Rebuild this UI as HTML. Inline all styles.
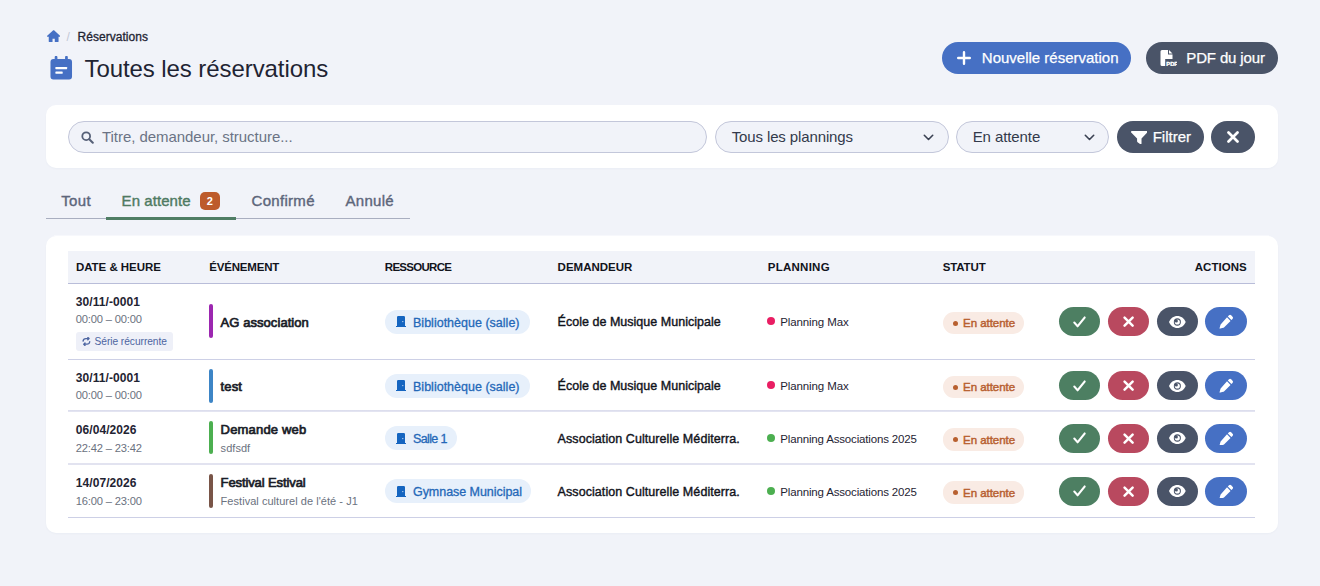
<!DOCTYPE html>
<html lang="fr">
<head>
<meta charset="utf-8">
<title>Toutes les réservations</title>
<style>
*{box-sizing:border-box;margin:0;padding:0}
html,body{width:1320px;height:586px;overflow:hidden}
body{background:#f1f3f9;font-family:"Liberation Sans",sans-serif;color:#1f2433;position:relative}
.abs{position:absolute}
svg{display:block;position:absolute}
.t{position:absolute;white-space:nowrap;line-height:1}
.btn{position:absolute;height:32px;border-radius:16px}
.card{position:absolute;left:46px;width:1231.500px;background:#fff;border-radius:10px;box-shadow:0 1px 2px rgba(40,50,100,.03)}
.inp{position:absolute;top:120.5px;height:32px;border-radius:16px;background:#f1f3f9;border:1px solid #c3c7da}
.hline{position:absolute;left:68px;width:1187px;height:1px;background:#cdd0e6}
.bar{position:absolute;left:209px;width:4px;border-radius:2px}
.res{position:absolute;left:384.5px;height:24px;border-radius:12px;background:#e7f0fb}
.dot{position:absolute;left:766.8px;width:8px;height:8px;border-radius:50%}
.st{position:absolute;left:943px;width:80.8px;height:22px;border-radius:11px;background:#f9ebe4}
.st i{position:absolute;left:10px;top:8.500px;width:5px;height:5px;border-radius:50%;background:#b8602f}
.ab{position:absolute;height:29px;border-radius:14.500px}
</style>
</head>
<body>
<!-- breadcrumb -->
<svg style="left:46.700px;top:29.800px;width:13.300px;height:12.400px" viewBox="0 0 13 12" preserveAspectRatio="none"><path fill="#4670c4" d="M6.500.2a.6.6 0 0 1 .4.150l5.900 5.300a.55.55 0 0 1-.37.960H11.300V11a1 1 0 0 1-1 1H7.600V8.500H5.400V12H2.700a1 1 0 0 1-1-1V6.600H.570a.55.55 0 0 1-.37-.960L6.100.350A.6.6 0 0 1 6.500.2z"/></svg>
<div class="t" style="left:66.50px;top:31.04px;font-size:12px;color:#c3c7d6;">/</div>
<div class="t" style="left:77.50px;top:31.04px;font-size:12px;color:#1f2433;letter-spacing:0.04px;-webkit-text-stroke:0.3px #1f2433;">Réservations</div>
<!-- title -->
<svg style="left:50px;top:56px;width:22.500px;height:23.500px" viewBox="0 0 22 24"><path fill="#4670c4" d="M4.300 1.200a1.400 1.400 0 0 1 2.800 0V3h7.800V1.200a1.400 1.400 0 0 1 2.800 0V3H19a3 3 0 0 1 3 3v15a3 3 0 0 1-3 3H3a3 3 0 0 1-3-3V6a3 3 0 0 1 3-3h1.300z"/><rect x="5" y="11.200" width="12" height="2.400" rx=".5" fill="#fff"/><rect x="5" y="15.800" width="7.500" height="2.400" rx=".5" fill="#fff"/></svg>
<div class="t" style="left:84.50px;top:57.48px;font-size:24px;color:#1f2433;letter-spacing:-0.08px;">Toutes les réservations</div>
<!-- header buttons -->
<div class="btn" style="left:942px;top:41.500px;width:189px;background:#4670c4"><svg style="left:14.500px;top:9px;width:14px;height:14px" viewBox="0 0 14 14"><path d="M7 1.200v11.600M1.200 7h11.600" stroke="#fff" stroke-width="2.400" stroke-linecap="round"/></svg></div>
<div class="t" style="left:981.80px;top:49.90px;font-size:15px;color:#fff;-webkit-text-stroke:0.25px #fff;">Nouvelle réservation</div>
<div class="btn" style="left:1146px;top:41.500px;width:132px;background:#4a5468"><svg style="left:14px;top:8px;width:17px;height:16px" viewBox="0 0 17 16"><path fill="#fff" d="M2 0h6v4.500h4.500V9H5.200v7H2a1.500 1.500 0 0 1-1.500-1.500v-13A1.500 1.500 0 0 1 2 0zM9 0l3.500 3.500H9z"/><text x="6.300" y="15.600" font-family="Liberation Sans, sans-serif" font-weight="700" font-size="5.800" fill="#fff" stroke="#fff" stroke-width=".35">PDF</text></svg></div>
<div class="t" style="left:1186.30px;top:49.90px;font-size:15px;color:#fff;letter-spacing:-0.14px;-webkit-text-stroke:0.25px #fff;">PDF du jour</div>
<!-- filter card -->
<div class="card" style="top:105px;height:63px"></div>
<div class="inp" style="left:68px;width:639px"><svg style="left:11.800px;top:9.200px;width:13px;height:13px" viewBox="0 0 13 13"><circle cx="5.200" cy="5.200" r="3.900" fill="none" stroke="#566077" stroke-width="1.800"/><path d="M8.300 8.300L11.800 11.800" stroke="#566077" stroke-width="2" stroke-linecap="round"/></svg></div>
<div class="t" style="left:102.00px;top:128.80px;font-size:15px;color:#6b7385;letter-spacing:-0.05px;">Titre, demandeur, structure...</div>
<div class="inp" style="left:715px;width:234px"><svg style="left:206.500px;top:12px;width:11px;height:7px" viewBox="0 0 11 7"><path d="M1.300 1.300L5.500 5.500l4.200-4.200" fill="none" stroke="#3a4152" stroke-width="1.600" stroke-linecap="round" stroke-linejoin="round"/></svg></div>
<div class="t" style="left:731.70px;top:128.80px;font-size:15px;color:#333a4b;letter-spacing:-0.12px;">Tous les plannings</div>
<div class="inp" style="left:956px;width:153px"><svg style="left:126.500px;top:12px;width:11px;height:7px" viewBox="0 0 11 7"><path d="M1.300 1.300L5.500 5.500l4.200-4.200" fill="none" stroke="#3a4152" stroke-width="1.600" stroke-linecap="round" stroke-linejoin="round"/></svg></div>
<div class="t" style="left:972.70px;top:128.80px;font-size:15px;color:#333a4b;letter-spacing:-0.09px;">En attente</div>
<div class="btn" style="left:1117px;top:120.500px;width:87px;background:#4a5468"><svg style="left:13.500px;top:10.300px;width:16.500px;height:13.500px" viewBox="0 0 16 14" preserveAspectRatio="none"><path fill="#fff" d="M.900 0h14.200a.900.900 0 0 1 .7 1.500L10.200 7.800V13a.800.800 0 0 1-1.300.6l-2.500-1.900a1.200 1.200 0 0 1-.5-1V7.800L.2 1.500A.900.900 0 0 1 .900 0z"/></svg></div>
<div class="t" style="left:1152.70px;top:128.80px;font-size:15px;color:#fff;-webkit-text-stroke:0.25px #fff;">Filtrer</div>
<div class="btn" style="left:1211px;top:120.500px;width:44px;background:#4a5468"><svg style="left:16px;top:10px;width:12px;height:12px" viewBox="0 0 12 12"><path d="M1.500 1.500l9 9M10.500 1.500l-9 9" stroke="#fff" stroke-width="2.700" stroke-linecap="round"/></svg></div>
<!-- tabs -->
<div class="t" style="left:61.20px;top:193.30px;font-size:15px;color:#5d667b;letter-spacing:0.34px;-webkit-text-stroke:0.4px #5d667b;">Tout</div>
<div class="t" style="left:121.60px;top:193.30px;font-size:15px;color:#4e7a62;letter-spacing:0.06px;-webkit-text-stroke:0.4px #4e7a62;">En attente</div>
<div class="abs" style="left:200px;top:191.500px;width:20px;height:18.500px;border-radius:5px;background:#bd5b2b"></div>
<div class="t" style="left:206.80px;top:196.29px;font-size:11px;color:#fff;font-weight:700;">2</div>
<div class="t" style="left:251.50px;top:193.30px;font-size:15px;color:#5d667b;letter-spacing:0.31px;-webkit-text-stroke:0.4px #5d667b;">Confirmé</div>
<div class="t" style="left:345.50px;top:193.30px;font-size:15px;color:#5d667b;letter-spacing:0.3px;-webkit-text-stroke:0.4px #5d667b;">Annulé</div>
<div class="abs" style="left:46px;top:218px;width:364px;height:1px;background:#a9aec0"></div>
<div class="abs" style="left:105.500px;top:217px;width:130.500px;height:3px;background:#4f7d64"></div>
<!-- table -->
<div class="abs" style="left:54px;top:235px;width:1215px;height:1px;background:#f7f8fc"></div><div class="card" style="top:236px;height:297px"></div>
<div class="abs" style="left:68px;top:251px;width:1187px;height:32px;background:#f1f3f9"></div>
<div class="hline" style="top:283px;background:#b9bdd9"></div>
<div class="t" style="left:75.90px;top:262.06px;font-size:11.5px;color:#12141c;font-weight:700;letter-spacing:-0.03px;">DATE &amp; HEURE</div>
<div class="t" style="left:209.25px;top:262.06px;font-size:11.5px;color:#12141c;font-weight:700;letter-spacing:-0.18px;">ÉVÉNEMENT</div>
<div class="t" style="left:384.80px;top:262.06px;font-size:11.5px;color:#12141c;font-weight:700;letter-spacing:-0.71px;">RESSOURCE</div>
<div class="t" style="left:557.60px;top:262.06px;font-size:11.5px;color:#12141c;font-weight:700;">DEMANDEUR</div>
<div class="t" style="left:767.70px;top:262.06px;font-size:11.5px;color:#12141c;font-weight:700;letter-spacing:0.27px;">PLANNING</div>
<div class="t" style="left:942.70px;top:262.06px;font-size:11.5px;color:#12141c;font-weight:700;letter-spacing:-0.12px;">STATUT</div>
<div class="t" style="right:73.20px;top:262.06px;font-size:11.5px;color:#12141c;font-weight:700;letter-spacing:0.05px;">ACTIONS</div>
<!-- row -->
<div class="t" style="left:75.75px;top:296.14px;font-size:12px;color:#1f2433;font-weight:700;letter-spacing:0.08px;">30/11/-0001</div>
<div class="t" style="left:75.75px;top:313.82px;font-size:11.2px;color:#6b7280;letter-spacing:-0.19px;">00:00 – 00:00</div>
<div class="abs" style="left:76.200px;top:332px;width:96.500px;height:19.300px;border-radius:3px;background:#eef0f8"><svg style="left:6.300px;top:5.300px;width:8.800px;height:8.800px" viewBox="0 0 10 10"><path d="M1.200 4.600A3.200 3.200 0 0 1 4.400 1.800h3.400M6.600 0.400l1.400 1.400-1.400 1.400M8.800 5.400A3.200 3.200 0 0 1 5.600 8.200H2.200M3.400 6.800L2 8.200l1.400 1.400" fill="none" stroke="#4c64a0" stroke-width="1.500" stroke-linecap="round" stroke-linejoin="round"/></svg></div>
<div class="t" style="left:94.50px;top:336.56px;font-size:10.2px;color:#4c64a0;letter-spacing:-0.04px;">Série récurrente</div>
<div class="bar" style="top:304.2px;height:34px;background:#9c27b0"></div>
<div class="t" style="left:220.60px;top:315.89px;font-size:13px;color:#1a1d28;letter-spacing:0.06px;-webkit-text-stroke:0.7px #1a1d28;">AG association</div>
<div class="res" style="top:309.5px;width:145px"><svg style="left:11.500px;top:6.500px;width:10px;height:11px" viewBox="0 0 10 11"><path fill="#1565c0" d="M2.200 0h5.600A1.200 1.200 0 0 1 9 1.200V10h1v1H0v-1h1V1.200A1.200 1.200 0 0 1 2.200 0z"/><circle cx="6.800" cy="5.600" r=".65" fill="#cfe0f5"/></svg></div>
<div class="t" style="left:413.00px;top:316.52px;font-size:12.5px;color:#2468b8;letter-spacing:0.01px;-webkit-text-stroke:0.3px #2468b8;">Bibliothèque (salle)</div>
<div class="t" style="left:557.60px;top:315.72px;font-size:12.5px;color:#12141c;letter-spacing:0.02px;-webkit-text-stroke:0.4px #12141c;">École de Musique Municipale</div>
<div class="dot" style="top:317.3px;background:#e91e63"></div>
<div class="t" style="left:780.30px;top:316.56px;font-size:11.5px;color:#1f2433;letter-spacing:-0.12px;">Planning Max</div>
<div class="st" style="top:312.0px;height:22px"><i style="top:8.5px"></i></div>
<div class="t" style="left:963.00px;top:318.46px;font-size:11.5px;color:#b8602f;letter-spacing:-0.04px;-webkit-text-stroke:0.45px #b8602f;">En attente</div>
<div class="ab" style="left:1059px;top:307.0px;width:41px;background:#4d7f62"><svg style="left:14px;top:8.500px;width:13px;height:12px" viewBox="0 0 13 11" preserveAspectRatio="none"><path d="M1.300 6l3.300 3.400L11.700 1.400" fill="none" stroke="#fff" stroke-width="2" stroke-linecap="round" stroke-linejoin="round"/></svg></div>
<div class="ab" style="left:1107.700px;top:307.0px;width:41.400px;background:#b9495f"><svg style="left:15.4px;top:9px;width:11.200px;height:11.200px" viewBox="0 0 10 10"><path d="M1.400 1.400l7.200 7.200M8.600 1.400l-7.200 7.200" stroke="#fff" stroke-width="2.200" stroke-linecap="round"/></svg></div>
<div class="ab" style="left:1157px;top:307.0px;width:41px;background:#4a5468"><svg style="left:12.3px;top:8.700px;width:16.700px;height:12px" viewBox="0 0 16 11" preserveAspectRatio="none"><path fill="#fff" d="M8 0C4.400 0 1.500 2.100 0 5.500 1.500 8.900 4.400 11 8 11s6.500-2.100 8-5.500C14.500 2.100 11.600 0 8 0z"/><circle cx="8" cy="5.500" r="3.400" fill="#4a5468"/><circle cx="8" cy="5.500" r="2.400" fill="#fff"/><circle cx="7" cy="4.500" r="1.500" fill="#4a5468"/></svg></div>
<div class="ab" style="left:1205.300px;top:307.0px;width:41.700px;background:#4670c4"><svg style="left:13.7px;top:7.200px;width:15.200px;height:14.600px" viewBox="0 0 14 14"><path fill="#fff" d="M9.300 1.300a1.500 1.500 0 0 1 2.100 0l1.300 1.300a1.500 1.500 0 0 1 0 2.100L11.600 5.800 8.200 2.400zM7.400 3.200l3.400 3.400-6.300 6.300a1.500 1.500 0 0 1-.7.400L.900 14a.500.500 0 0 1-.6-.6l.8-2.900a1.500 1.500 0 0 1 .4-.7z"/></svg></div>
<div class="hline" style="top:359px"></div>
<!-- row -->
<div class="t" style="left:75.75px;top:371.84px;font-size:12px;color:#1f2433;font-weight:700;letter-spacing:0.08px;">30/11/-0001</div>
<div class="t" style="left:75.75px;top:389.62px;font-size:11.2px;color:#6b7280;letter-spacing:-0.19px;">00:00 – 00:00</div>
<div class="bar" style="top:368.6px;height:34px;background:#3d85c6"></div>
<div class="t" style="left:220.60px;top:379.89px;font-size:13px;color:#1a1d28;letter-spacing:0.1px;-webkit-text-stroke:0.7px #1a1d28;">test</div>
<div class="res" style="top:373.5px;width:145px"><svg style="left:11.500px;top:6.500px;width:10px;height:11px" viewBox="0 0 10 11"><path fill="#1565c0" d="M2.200 0h5.600A1.200 1.200 0 0 1 9 1.200V10h1v1H0v-1h1V1.200A1.200 1.200 0 0 1 2.200 0z"/><circle cx="6.800" cy="5.600" r=".65" fill="#cfe0f5"/></svg></div>
<div class="t" style="left:413.00px;top:380.52px;font-size:12.5px;color:#2468b8;letter-spacing:0.01px;-webkit-text-stroke:0.3px #2468b8;">Bibliothèque (salle)</div>
<div class="t" style="left:557.60px;top:379.72px;font-size:12.5px;color:#12141c;letter-spacing:0.02px;-webkit-text-stroke:0.4px #12141c;">École de Musique Municipale</div>
<div class="dot" style="top:381.3px;background:#e91e63"></div>
<div class="t" style="left:780.30px;top:380.56px;font-size:11.5px;color:#1f2433;letter-spacing:-0.12px;">Planning Max</div>
<div class="st" style="top:376.0px;height:22px"><i style="top:8.5px"></i></div>
<div class="t" style="left:963.00px;top:382.46px;font-size:11.5px;color:#b8602f;letter-spacing:-0.04px;-webkit-text-stroke:0.45px #b8602f;">En attente</div>
<div class="ab" style="left:1059px;top:371.0px;width:41px;background:#4d7f62"><svg style="left:14px;top:8.500px;width:13px;height:12px" viewBox="0 0 13 11" preserveAspectRatio="none"><path d="M1.300 6l3.300 3.400L11.700 1.400" fill="none" stroke="#fff" stroke-width="2" stroke-linecap="round" stroke-linejoin="round"/></svg></div>
<div class="ab" style="left:1107.700px;top:371.0px;width:41.400px;background:#b9495f"><svg style="left:15.4px;top:9px;width:11.200px;height:11.200px" viewBox="0 0 10 10"><path d="M1.400 1.400l7.200 7.200M8.600 1.400l-7.200 7.200" stroke="#fff" stroke-width="2.200" stroke-linecap="round"/></svg></div>
<div class="ab" style="left:1157px;top:371.0px;width:41px;background:#4a5468"><svg style="left:12.3px;top:8.700px;width:16.700px;height:12px" viewBox="0 0 16 11" preserveAspectRatio="none"><path fill="#fff" d="M8 0C4.400 0 1.500 2.100 0 5.500 1.500 8.900 4.400 11 8 11s6.500-2.100 8-5.500C14.500 2.100 11.600 0 8 0z"/><circle cx="8" cy="5.500" r="3.400" fill="#4a5468"/><circle cx="8" cy="5.500" r="2.400" fill="#fff"/><circle cx="7" cy="4.500" r="1.500" fill="#4a5468"/></svg></div>
<div class="ab" style="left:1205.300px;top:371.0px;width:41.700px;background:#4670c4"><svg style="left:13.7px;top:7.200px;width:15.200px;height:14.600px" viewBox="0 0 14 14"><path fill="#fff" d="M9.300 1.300a1.500 1.500 0 0 1 2.100 0l1.300 1.300a1.500 1.500 0 0 1 0 2.100L11.600 5.800 8.200 2.400zM7.400 3.200l3.400 3.400-6.300 6.300a1.500 1.500 0 0 1-.7.400L.900 14a.500.500 0 0 1-.6-.6l.8-2.900a1.500 1.500 0 0 1 .4-.7z"/></svg></div>
<div class="hline" style="top:410px;height:2px;background:linear-gradient(#d9dbec,#e6e7f3)"></div>
<!-- row -->
<div class="t" style="left:75.75px;top:424.04px;font-size:12px;color:#1f2433;font-weight:700;letter-spacing:0.08px;">06/04/2026</div>
<div class="t" style="left:75.75px;top:442.72px;font-size:11.2px;color:#6b7280;letter-spacing:-0.19px;">22:42 – 23:42</div>
<div class="bar" style="top:420.8px;height:33.5px;background:#4caf50"></div>
<div class="t" style="left:220.60px;top:422.99px;font-size:13px;color:#1a1d28;letter-spacing:0.18px;-webkit-text-stroke:0.7px #1a1d28;">Demande web</div>
<div class="t" style="left:220.60px;top:442.89px;font-size:11px;color:#6b7280;letter-spacing:0.04px;">sdfsdf</div>
<div class="res" style="top:426px;width:72px"><svg style="left:11.500px;top:6.500px;width:10px;height:11px" viewBox="0 0 10 11"><path fill="#1565c0" d="M2.200 0h5.600A1.200 1.200 0 0 1 9 1.200V10h1v1H0v-1h1V1.200A1.200 1.200 0 0 1 2.200 0z"/><circle cx="6.800" cy="5.600" r=".65" fill="#cfe0f5"/></svg></div>
<div class="t" style="left:413.00px;top:433.02px;font-size:12.5px;color:#2468b8;letter-spacing:-0.63px;-webkit-text-stroke:0.3px #2468b8;">Salle 1</div>
<div class="t" style="left:557.60px;top:433.22px;font-size:12.5px;color:#12141c;letter-spacing:0.07px;-webkit-text-stroke:0.4px #12141c;">Association Culturelle Méditerra.</div>
<div class="dot" style="top:433.8px;background:#4caf50"></div>
<div class="t" style="left:780.30px;top:434.06px;font-size:11.5px;color:#1f2433;letter-spacing:-0.16px;">Planning Associations 2025</div>
<div class="st" style="top:427.5px;height:23px"><i style="top:9.5px"></i></div>
<div class="t" style="left:963.00px;top:434.96px;font-size:11.5px;color:#b8602f;letter-spacing:-0.04px;-webkit-text-stroke:0.45px #b8602f;">En attente</div>
<div class="ab" style="left:1059px;top:423.5px;width:41px;background:#4d7f62"><svg style="left:14px;top:8.500px;width:13px;height:12px" viewBox="0 0 13 11" preserveAspectRatio="none"><path d="M1.300 6l3.300 3.400L11.700 1.400" fill="none" stroke="#fff" stroke-width="2" stroke-linecap="round" stroke-linejoin="round"/></svg></div>
<div class="ab" style="left:1107.700px;top:423.5px;width:41.400px;background:#b9495f"><svg style="left:15.4px;top:9px;width:11.200px;height:11.200px" viewBox="0 0 10 10"><path d="M1.400 1.400l7.200 7.200M8.600 1.400l-7.200 7.200" stroke="#fff" stroke-width="2.200" stroke-linecap="round"/></svg></div>
<div class="ab" style="left:1157px;top:423.5px;width:41px;background:#4a5468"><svg style="left:12.3px;top:8.700px;width:16.700px;height:12px" viewBox="0 0 16 11" preserveAspectRatio="none"><path fill="#fff" d="M8 0C4.400 0 1.500 2.100 0 5.500 1.500 8.900 4.400 11 8 11s6.500-2.100 8-5.500C14.500 2.100 11.600 0 8 0z"/><circle cx="8" cy="5.500" r="3.400" fill="#4a5468"/><circle cx="8" cy="5.500" r="2.400" fill="#fff"/><circle cx="7" cy="4.500" r="1.500" fill="#4a5468"/></svg></div>
<div class="ab" style="left:1205.300px;top:423.5px;width:41.700px;background:#4670c4"><svg style="left:13.7px;top:7.200px;width:15.200px;height:14.600px" viewBox="0 0 14 14"><path fill="#fff" d="M9.300 1.300a1.500 1.500 0 0 1 2.100 0l1.300 1.300a1.500 1.500 0 0 1 0 2.100L11.600 5.800 8.200 2.400zM7.400 3.200l3.400 3.400-6.300 6.300a1.500 1.500 0 0 1-.7.400L.900 14a.500.500 0 0 1-.6-.6l.8-2.900a1.500 1.500 0 0 1 .4-.7z"/></svg></div>
<div class="hline" style="top:463px;height:2px;background:#e2e3f0"></div>
<!-- row -->
<div class="t" style="left:75.75px;top:476.84px;font-size:12px;color:#1f2433;font-weight:700;letter-spacing:0.08px;">14/07/2026</div>
<div class="t" style="left:75.75px;top:495.72px;font-size:11.2px;color:#6b7280;letter-spacing:-0.19px;">16:00 – 23:00</div>
<div class="bar" style="top:474.4px;height:33.5px;background:#795548"></div>
<div class="t" style="left:220.60px;top:475.99px;font-size:13px;color:#1a1d28;letter-spacing:-0.11px;-webkit-text-stroke:0.7px #1a1d28;">Festival Estival</div>
<div class="t" style="left:220.60px;top:495.89px;font-size:11px;color:#6b7280;letter-spacing:0.04px;">Festival culturel de l'été - J1</div>
<div class="res" style="top:479px;width:146.8px"><svg style="left:11.500px;top:6.500px;width:10px;height:11px" viewBox="0 0 10 11"><path fill="#1565c0" d="M2.200 0h5.600A1.200 1.200 0 0 1 9 1.200V10h1v1H0v-1h1V1.200A1.200 1.200 0 0 1 2.200 0z"/><circle cx="6.800" cy="5.600" r=".65" fill="#cfe0f5"/></svg></div>
<div class="t" style="left:413.00px;top:486.02px;font-size:12.5px;color:#2468b8;letter-spacing:-0.05px;-webkit-text-stroke:0.3px #2468b8;">Gymnase Municipal</div>
<div class="t" style="left:557.60px;top:486.22px;font-size:12.5px;color:#12141c;letter-spacing:0.07px;-webkit-text-stroke:0.4px #12141c;">Association Culturelle Méditerra.</div>
<div class="dot" style="top:486.8px;background:#4caf50"></div>
<div class="t" style="left:780.30px;top:487.06px;font-size:11.5px;color:#1f2433;letter-spacing:-0.16px;">Planning Associations 2025</div>
<div class="st" style="top:480.5px;height:23px"><i style="top:9.5px"></i></div>
<div class="t" style="left:963.00px;top:487.96px;font-size:11.5px;color:#b8602f;letter-spacing:-0.04px;-webkit-text-stroke:0.45px #b8602f;">En attente</div>
<div class="ab" style="left:1059px;top:476.5px;width:41px;background:#4d7f62"><svg style="left:14px;top:8.500px;width:13px;height:12px" viewBox="0 0 13 11" preserveAspectRatio="none"><path d="M1.300 6l3.300 3.400L11.700 1.400" fill="none" stroke="#fff" stroke-width="2" stroke-linecap="round" stroke-linejoin="round"/></svg></div>
<div class="ab" style="left:1107.700px;top:476.5px;width:41.400px;background:#b9495f"><svg style="left:15.4px;top:9px;width:11.200px;height:11.200px" viewBox="0 0 10 10"><path d="M1.400 1.400l7.200 7.200M8.600 1.400l-7.200 7.200" stroke="#fff" stroke-width="2.200" stroke-linecap="round"/></svg></div>
<div class="ab" style="left:1157px;top:476.5px;width:41px;background:#4a5468"><svg style="left:12.3px;top:8.700px;width:16.700px;height:12px" viewBox="0 0 16 11" preserveAspectRatio="none"><path fill="#fff" d="M8 0C4.400 0 1.500 2.100 0 5.500 1.500 8.900 4.400 11 8 11s6.500-2.100 8-5.500C14.500 2.100 11.600 0 8 0z"/><circle cx="8" cy="5.500" r="3.400" fill="#4a5468"/><circle cx="8" cy="5.500" r="2.400" fill="#fff"/><circle cx="7" cy="4.500" r="1.500" fill="#4a5468"/></svg></div>
<div class="ab" style="left:1205.300px;top:476.5px;width:41.700px;background:#4670c4"><svg style="left:13.7px;top:7.200px;width:15.200px;height:14.600px" viewBox="0 0 14 14"><path fill="#fff" d="M9.300 1.300a1.500 1.500 0 0 1 2.100 0l1.300 1.300a1.500 1.500 0 0 1 0 2.100L11.600 5.800 8.200 2.400zM7.400 3.200l3.400 3.400-6.300 6.300a1.500 1.500 0 0 1-.7.400L.900 14a.500.500 0 0 1-.6-.6l.8-2.900a1.500 1.500 0 0 1 .4-.7z"/></svg></div>
<div class="hline" style="top:517px"></div>
</body>
</html>
